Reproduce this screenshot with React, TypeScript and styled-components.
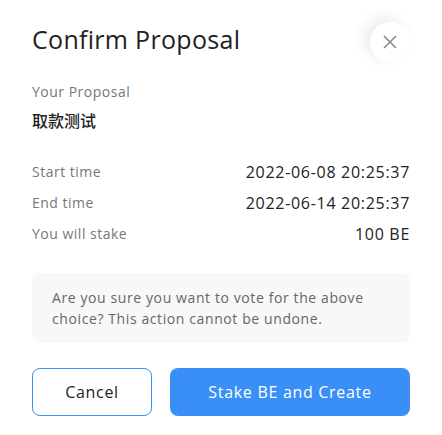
import styled, { createGlobalStyle } from "styled-components";

const GlobalStyle = createGlobalStyle`
  body {
    margin: 0;
    background: #ffffff;
    font-family: "Open Sans", "Noto Sans CJK SC", sans-serif;
  }
`;

const Modal = styled.div`
  width: 442px;
  height: 435px;
  box-sizing: border-box;
  padding: 22px 32px 0 32px;
  display: flex;
  flex-direction: column;
`;

const Header = styled.div`
  display: flex;
  align-items: center;
  justify-content: space-between;
  height: 40px;
`;

const Title = styled.h2`
  margin: 0 0 6px 0;
  font-size: 25px;
  font-weight: 400;
  color: #222;
  letter-spacing: 0.3px;
`;

const CloseButton = styled.button`
  width: 40px;
  height: 40px;
  border-radius: 50%;
  border: none;
  background: #fff;
  box-shadow: -6px -4px 14px rgba(0, 0, 0, 0.08);
  display: flex;
  align-items: center;
  justify-content: center;
  padding: 0;
  cursor: pointer;
`;

const Label = styled.div`
  font-size: 14px;
  color: #777;
  letter-spacing: 0.5px;
`;

const SectionLabel = styled(Label)`
  margin-top: 20px;
`;

const ProposalName = styled.div`
  margin-top: 7px;
  font-size: 16px;
  font-weight: 500;
  color: #222;
  font-family: "Noto Sans CJK SC", sans-serif;
`;

const Rows = styled.div`
  margin-top: 28px;
  display: flex;
  flex-direction: column;
  gap: 8px;
`;

const Row = styled.div`
  display: flex;
  align-items: center;
  justify-content: space-between;
  height: 23px;
`;

const Value = styled.div`
  font-size: 16px;
  color: #222;
  letter-spacing: 0.7px;
`;

const Notice = styled.div`
  margin-top: 28px;
  background: #f8f8f8;
  border-radius: 8px;
  padding: 14px 20px;
  font-size: 14px;
  line-height: 21px;
  color: #666;
  letter-spacing: 0.6px;
`;

const Actions = styled.div`
  margin-top: 25px;
  display: flex;
  gap: 18px;
`;

const BaseButton = styled.button`
  height: 48px;
  border-radius: 8px;
  font-family: inherit;
  font-size: 16px;
  letter-spacing: 0.7px;
  cursor: pointer;
`;

const CancelButton = styled(BaseButton)`
  width: 120px;
  background: #fff;
  border: 1px solid #3a8ff7;
  color: #222;
`;

const PrimaryButton = styled(BaseButton)`
  flex: 1;
  background: #3a8ff7;
  border: none;
  color: #fff;
`;

const rows = [
  { label: "Start time", value: "2022-06-08 20:25:37" },
  { label: "End time", value: "2022-06-14 20:25:37" },
  { label: "You will stake", value: "100 BE" },
];

export default function App() {
  return (
    <>
      <GlobalStyle />
      <Modal>
        <Header>
          <Title>Confirm Proposal</Title>
          <CloseButton aria-label="close">
            <svg width="14" height="14" viewBox="0 0 14 14">
              <path d="M1 1L13 13M13 1L1 13" stroke="#8a8a8a" strokeWidth="1.6" />
            </svg>
          </CloseButton>
        </Header>
        <SectionLabel>Your Proposal</SectionLabel>
        <ProposalName>取款测试</ProposalName>
        <Rows>
          {rows.map((r) => (
            <Row key={r.label}>
              <Label>{r.label}</Label>
              <Value>{r.value}</Value>
            </Row>
          ))}
        </Rows>
        <Notice>
          Are you sure you want to vote for the above choice? This action cannot be undone.
        </Notice>
        <Actions>
          <CancelButton>Cancel</CancelButton>
          <PrimaryButton>Stake BE and Create</PrimaryButton>
        </Actions>
      </Modal>
    </>
  );
}
